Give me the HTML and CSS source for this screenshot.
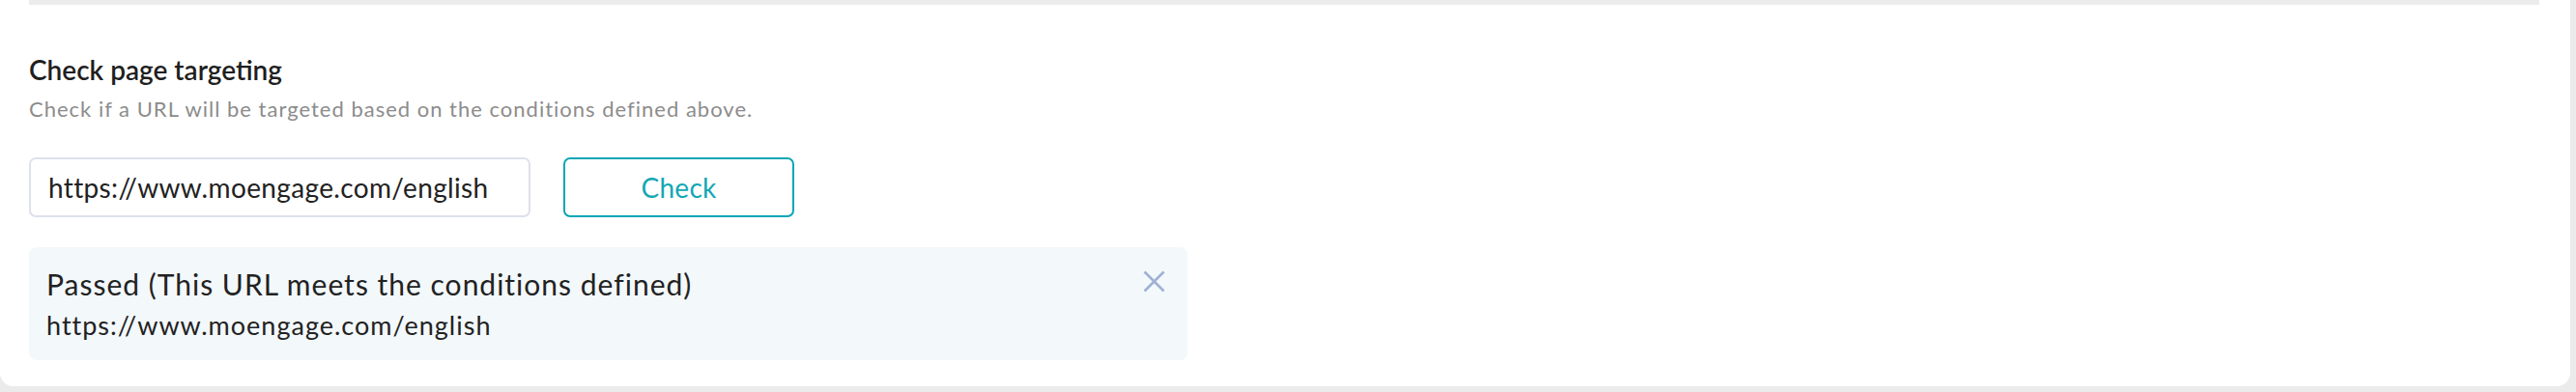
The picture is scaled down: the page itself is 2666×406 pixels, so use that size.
FILE: index.html
```html
<!DOCTYPE html>
<html lang="en">
<head>
<meta charset="utf-8">
<title>Check page targeting</title>
<link rel="stylesheet" href="styles.css">
</head>
<body>
<div class="card">
  <div class="divider"></div>
  <section class="targeting">
    <h2 class="title">Check page targeting</h2>
    <p class="subtitle">Check if a URL will be targeted based on the conditions defined above.</p>
    <div class="check-row">
      <input class="url-input" type="text" value="https://www.moengage.com/english">
      <button class="check-btn" type="button">Check</button>
    </div>
    <div class="result">
      <div class="result-text">
        <div class="result-title">Passed (This URL meets the conditions defined)</div>
        <div class="result-url">https://www.moengage.com/english</div>
      </div>
      <button class="close-btn" type="button" aria-label="Close">
        <svg width="23" height="23" viewBox="0 0 23 23"><path d="M1.5 1.5 L21.5 21.5 M21.5 1.5 L1.5 21.5" stroke="#9fb1d3" stroke-width="2.6" fill="none"/></svg>
      </button>
    </div>
  </section>
</div>
</body>
</html>
```
FILE: styles.css
```css
html, body {
  margin: 0;
  padding: 0;
}
body {
  background: #ebebeb;
  font-family: Lato, "Liberation Sans", sans-serif;
  color: #222;
  width: 2666px;
  height: 406px;
  overflow: hidden;
}
.card {
  width: 2660px;
  height: 400px;
  box-sizing: border-box;
  background: #fff;
  border-radius: 0 0 14px 14px;
  padding: 0 32px 0 30px;
}
.divider {
  height: 5px;
  background: #ececec;
}
.targeting {
  display: flex;
  flex-direction: column;
  align-items: flex-start;
}
.title {
  margin: 50px 0 0;
  font-size: 28px;
  line-height: 34px;
  font-weight: 600;
  color: #1f1f1f;
}
.subtitle {
  margin: 10px 0 0;
  font-size: 22px;
  line-height: 28px;
  letter-spacing: 1px;
  color: #8c8c8c;
}
.check-row {
  display: flex;
  gap: 34px;
  margin-top: 36px;
}
.url-input {
  width: 519px;
  height: 62px;
  box-sizing: border-box;
  border: 2px solid #dde1ee;
  border-radius: 7px;
  padding: 0 18px;
  font-family: inherit;
  font-size: 28px;
  letter-spacing: 0.35px;
  color: #222;
  background: #fff;
  outline: none;
}
.check-btn {
  width: 239px;
  height: 62px;
  box-sizing: border-box;
  border: 2px solid #0aa6b5;
  border-radius: 7px;
  background: #fff;
  color: #14a7b4;
  font-family: inherit;
  font-size: 28px;
  letter-spacing: 0.3px;
  padding: 0;
}
.result {
  margin-top: 31px;
  width: 1199px;
  height: 117px;
  box-sizing: border-box;
  background: #f3f8fb;
  border-radius: 8px;
  padding: 20px 23px 20px 18px;
  display: flex;
  justify-content: space-between;
  align-items: flex-start;
}
.result-title {
  font-size: 30px;
  line-height: 36px;
  letter-spacing: 1px;
  color: #222;
}
.result-url {
  margin-top: 9px;
  font-size: 27px;
  line-height: 32px;
  letter-spacing: 1px;
  color: #222;
}
.close-btn {
  margin-top: 4px;
  padding: 0;
  border: 0;
  background: none;
  width: 23px;
  height: 23px;
  display: flex;
}
```
